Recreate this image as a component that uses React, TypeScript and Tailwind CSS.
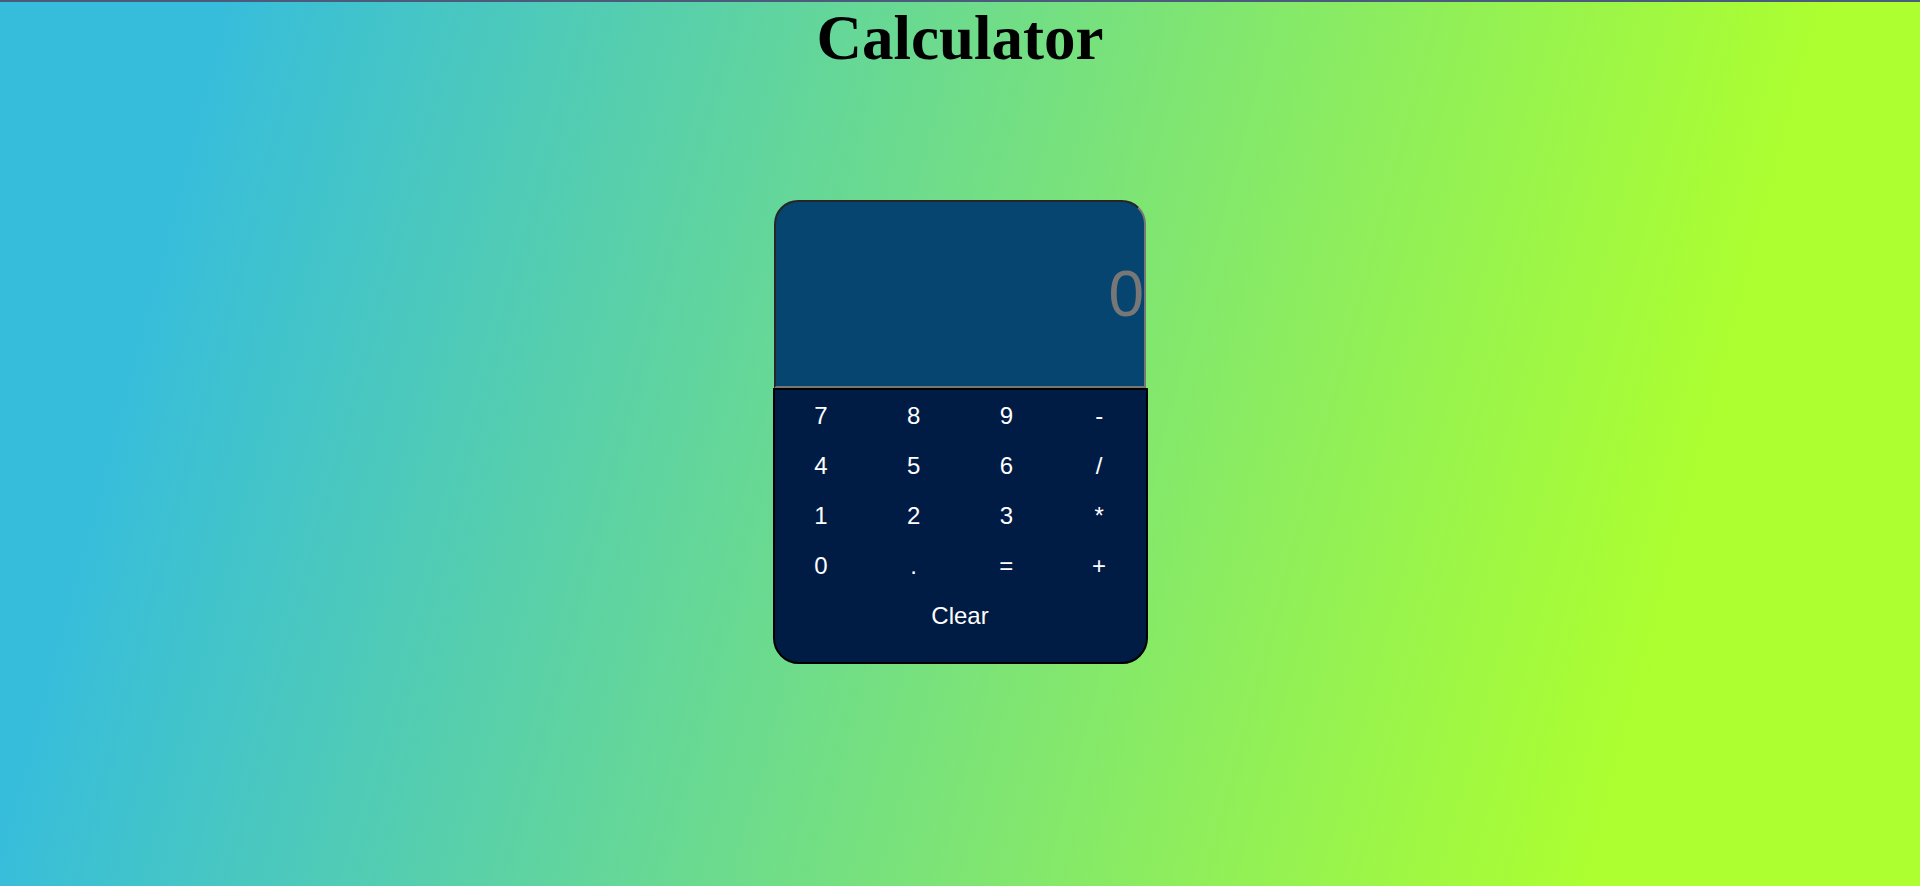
import React from "react";

const rows = [
  ["7", "8", "9", "-"],
  ["4", "5", "6", "/"],
  ["1", "2", "3", "*"],
  ["0", ".", "=", "+"],
];

export default function App() {
  return (
    <div className="min-h-[886px] border-t-2 border-[#4b5b7b] bg-[linear-gradient(105deg,#36bddc_10%,#adff2f_85%)]">
      <h1 className="m-0 text-center font-['Liberation_Serif',serif] text-[63px] font-bold leading-[1.168] text-black">
        Calculator
      </h1>
      <div className="mx-auto mt-[124px] flex w-[375px] flex-col items-center">
        <div className="flex h-[188px] w-[372px] items-center justify-end rounded-t-[24px] border-2 border-t-[#262626] border-l-[#262626] border-r-[#777777] border-b-[#777777] bg-[#05456f] font-['Liberation_Sans',sans-serif] text-[64px] leading-none text-[#777777]">
          0
        </div>
        <div className="w-[375px] rounded-b-[26px] border-2 border-black bg-[#001c45] pt-[1px] pb-[21px] font-['Liberation_Sans',sans-serif] text-[24px] text-white">
          <div className="grid grid-cols-4">
            {rows.flat().map((k) => (
              <button
                key={k}
                className="flex h-[50px] items-center justify-center bg-transparent text-white"
              >
                {k}
              </button>
            ))}
          </div>
          <button className="flex h-[50px] w-full items-center justify-center bg-transparent text-white">
            Clear
          </button>
        </div>
      </div>
    </div>
  );
}
